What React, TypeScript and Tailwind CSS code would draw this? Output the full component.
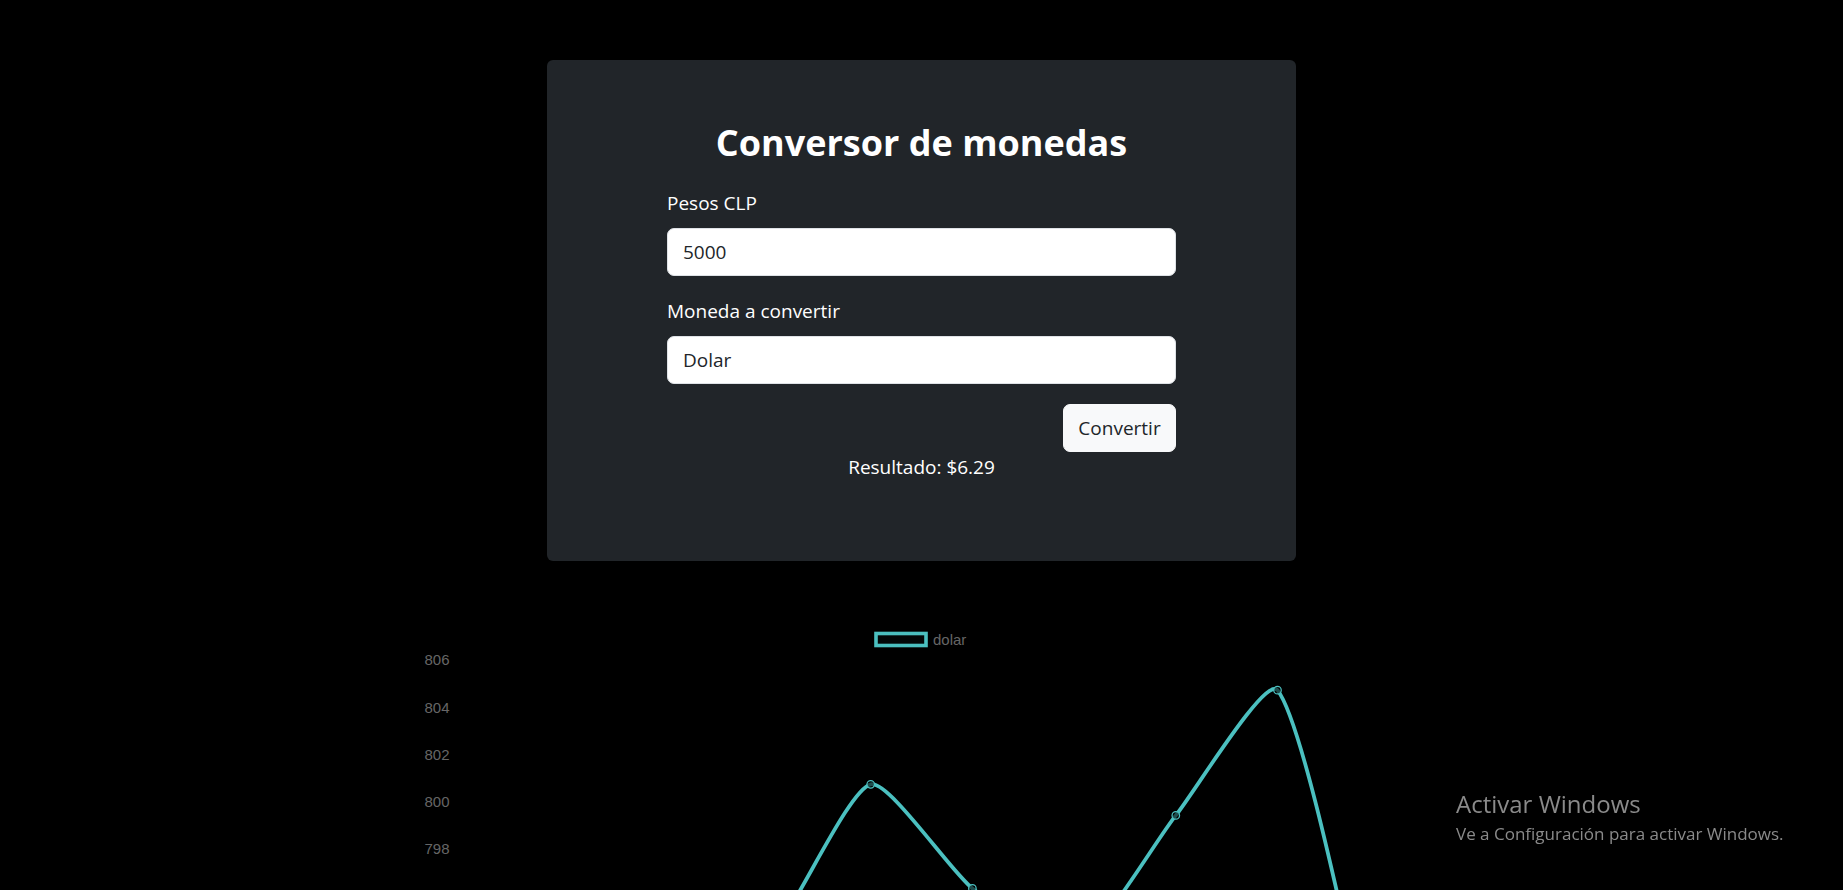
import { useMemo } from "react";

type Pt = { x: number; y: number };

const TEAL = "rgb(75,192,192)";

// dolar values, one per day
const DATA = [790, 788, 792, 794.2, 800.72, 796.3, 793.8, 799.4, 804.72, 788.3];
const TICKS = [806, 804, 802, 800, 798];

const X0 = 48.9;
const STEP = 101.7;
const Y0 = 60;
const UNIT = 23.55;

function yOf(v: number) {
  return Y0 + (806 - v) * UNIT;
}

// chart.js style control points
function splinePath(pts: Pt[], t = 0.2) {
  const cps = pts.map((cur, i) => {
    const prev = pts[i - 1] ?? cur;
    const next = pts[i + 1] ?? cur;
    const d01 = Math.hypot(cur.x - prev.x, cur.y - prev.y);
    const d12 = Math.hypot(next.x - cur.x, next.y - cur.y);
    const sum = d01 + d12 || 1;
    const fa = (t * d01) / sum;
    const fb = (t * d12) / sum;
    return {
      prev: { x: cur.x - fa * (next.x - prev.x), y: cur.y - fa * (next.y - prev.y) },
      next: { x: cur.x + fb * (next.x - prev.x), y: cur.y + fb * (next.y - prev.y) },
    };
  });
  let d = `M${pts[0].x},${pts[0].y}`;
  for (let i = 1; i < pts.length; i++) {
    const a = cps[i - 1].next;
    const b = cps[i].prev;
    d += ` C${a.x},${a.y} ${b.x},${b.y} ${pts[i].x},${pts[i].y}`;
  }
  return d;
}

function DolarChart() {
  const pts = useMemo(() => DATA.map((v, i) => ({ x: X0 + STEP * i, y: yOf(v) })), []);
  const path = useMemo(() => splinePath(pts), [pts]);

  return (
    <div className="mx-auto mt-[39px] w-[1013px]">
      <svg width="1013" height="520" className="block" style={{ fontFamily: "'Liberation Sans', Arial, sans-serif" }}>
        <rect x="461" y="33.5" width="50" height="12" fill="rgba(75,192,192,0.04)" stroke={TEAL} strokeWidth="3.6" />
        <text x="518" y="45.3" fontSize="15" fill="#666">
          dolar
        </text>
        {TICKS.map((t, i) => (
          <text key={t} x="34.5" y={Y0 + i * 47.1 + 5.4} fontSize="15" fill="#666" textAnchor="end">
            {t}
          </text>
        ))}
        <path d={path} fill="none" stroke={TEAL} strokeWidth="3.75" />
        {pts.map((p, i) => (
          <circle key={i} cx={p.x} cy={p.y} r="3.75" fill="rgba(0,0,0,0.6)" stroke={TEAL} strokeWidth="1.25" />
        ))}
      </svg>
    </div>
  );
}

export default function App() {
  return (
    <div className="min-h-screen bg-black pt-[60px] font-['Open_Sans',sans-serif]">
      <div className="mx-auto w-[749px] rounded-[6px] bg-[#212529] px-[120px] pb-[79px] pt-[62px] text-white">
        <h1 className="mb-[24px] text-center text-[36px] font-bold leading-[42px]">Conversor de monedas</h1>
        <form onSubmit={(e) => e.preventDefault()}>
          <div className="mb-[20px]">
            <label className="mb-[10px] block text-[19px] leading-[30px]">Pesos CLP</label>
            <input
              type="number"
              defaultValue="5000"
              className="block h-[48px] w-full appearance-none rounded-[7px] border border-[#dee2e6] bg-white px-[15px] text-[19px] text-[#212529] outline-none"
            />
          </div>
          <div className="mb-[20px]">
            <label className="mb-[10px] block text-[19px] leading-[30px]">Moneda a convertir</label>
            <select
              defaultValue="dolar"
              className="block h-[48px] w-full appearance-none rounded-[7px] border border-[#dee2e6] bg-white px-[15px] text-[19px] text-[#212529] outline-none"
            >
              <option value="dolar">Dolar</option>
              <option value="euro">Euro</option>
              <option value="uf">UF</option>
            </select>
          </div>
          <div className="flex justify-end">
            <button
              type="submit"
              className="h-[48px] w-[113px] rounded-[7px] border border-[#f8f9fa] bg-[#f8f9fa] text-[19px] text-[#212529]"
            >
              Convertir
            </button>
          </div>
          <p className="text-center text-[19px] leading-[30px]">Resultado: $6.29</p>
        </form>
      </div>
      <DolarChart />
      <div className="pointer-events-none fixed left-[1456px] top-[786px] font-['Open_Sans',sans-serif] text-[#8a8a8a]">
        <div className="text-[24px] leading-[36px]">Activar Windows</div>
        <div className="text-[17px] leading-[24px]">Ve a Configuración para activar Windows.</div>
      </div>
    </div>
  );
}
